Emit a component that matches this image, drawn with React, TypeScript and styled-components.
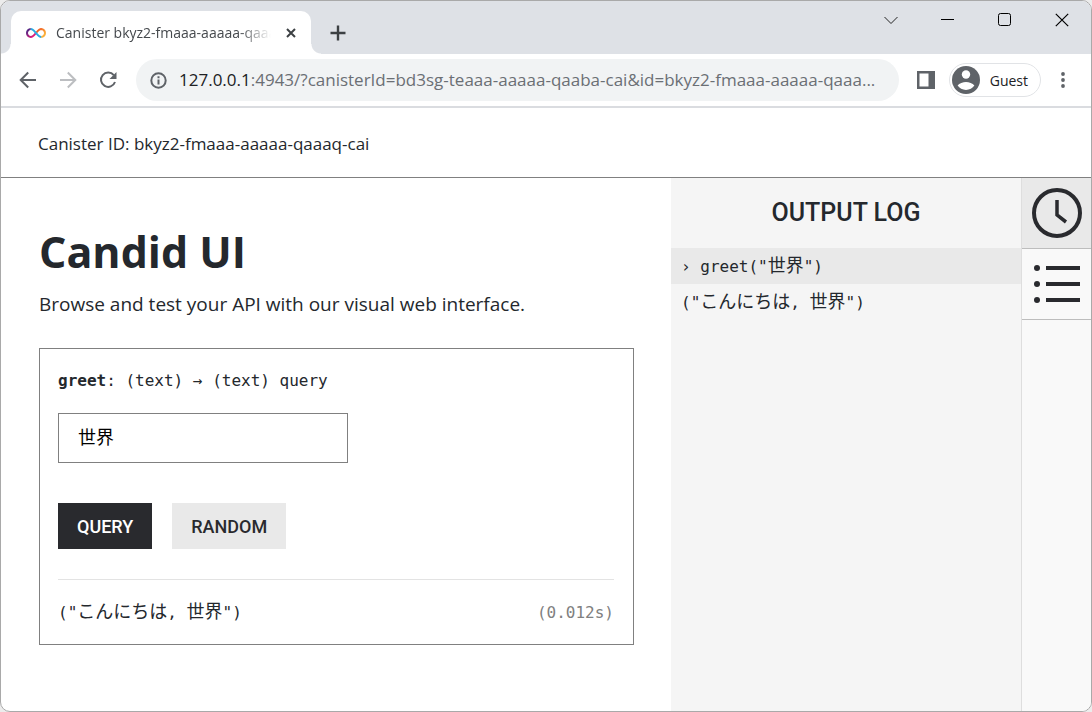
import React from 'react';
import styled, { createGlobalStyle } from 'styled-components';

const sans = `"Open Sans", "Noto Sans", sans-serif`;
const mono = `"DejaVu Sans Mono", "Noto Sans CJK JP", monospace`;

const GlobalStyle = createGlobalStyle`
  *, *::before, *::after { box-sizing: border-box; }
  body { margin: 0; background: #ececec; color: #24282d; font-family: ${sans}; }
  button, input { margin: 0; padding: 0; border: 0; background: none; font: inherit; color: inherit; }
  button { cursor: pointer; }
  h1, h2, p { margin: 0; }
  svg { display: block; flex: none; }
`;

const Window = styled.div`
  display: flex;
  flex-direction: column;
  min-height: 100vh;
  border: 1px solid #a9a9a9;
  border-radius: 10px;
  background: #fff;
  overflow: hidden;
`;

const TabStrip = styled.div`
  display: flex;
  align-items: flex-end;
  height: 53px;
  padding: 0 1px 0 10px;
  background: #dee1e6;
`;

const Tab = styled.div`
  position: relative;
  display: flex;
  align-items: center;
  width: 300px;
  height: 43px;
  padding: 0 12px 0 15px;
  border-radius: 10px 10px 0 0;
  background: #fff;

  &::before, &::after {
    content: '';
    position: absolute;
    bottom: 0;
    width: 10px;
    height: 10px;
  }
  &::before {
    right: 100%;
    background: radial-gradient(circle at 0 0, #dee1e6 9px, #fff 10px);
  }
  &::after {
    left: 100%;
    background: radial-gradient(circle at 100% 0, #dee1e6 9px, #fff 10px);
  }
`;

const TabTitle = styled.button`
  flex: 1;
  min-width: 0;
  margin: 0 12px 0 10px;
  overflow: hidden;
  text-align: left;
  white-space: nowrap;
  font-size: 14px;
  line-height: 22px;
  color: #45494d;
  mask-image: linear-gradient(to right, #000 85%, transparent);
`;

const IconButton = styled.button<{ $w?: number; $h?: number }>`
  display: flex;
  align-items: center;
  justify-content: center;
  flex: none;
  width: ${(p) => p.$w ?? 40}px;
  height: ${(p) => p.$h ?? 40}px;
`;

const NewTab = styled.div`
  display: flex;
  align-items: center;
  height: 43px;
  padding-left: 7px;
`;

const WindowControls = styled.div`
  display: flex;
  align-self: flex-start;
  margin-left: auto;
`;

const Toolbar = styled.div`
  display: flex;
  align-items: center;
  height: 54px;
  padding: 0 8px 0 7px;
  border-bottom: 2px solid #dadce0;
`;

const AddressBar = styled.div`
  display: flex;
  align-items: center;
  flex: 1;
  min-width: 0;
  height: 42px;
  margin: 0 7px 0 8px;
  padding: 0 14px;
  border-radius: 21px;
  background: #f1f3f4;
  font-size: 17px;
  line-height: 24px;
`;

const Host = styled.label`
  margin-left: 12px;
  color: #202124;
`;

const UrlInput = styled.input`
  flex: 1;
  min-width: 0;
  height: 24px;
  color: #6b6f74;
  outline: none;
  text-overflow: ellipsis;
`;

const Profile = styled.button`
  display: flex;
  align-items: center;
  gap: 10px;
  height: 34px;
  margin: 0 2px 0 3px;
  padding: 0 12px 0 2px;
  border: 1px solid #e1e3e6;
  border-radius: 17px;
  font-size: 14px;
  color: #202124;
`;

const CanisterBar = styled.header`
  display: flex;
  align-items: center;
  height: 70px;
  padding: 2px 37px 0;
  border-bottom: 1px solid #808080;
  font-size: 17px;
  line-height: 24px;
`;

const Body = styled.div`
  display: flex;
  flex: 1;
`;

const Main = styled.main`
  flex: 1;
  min-width: 0;
  padding: 42px 37px 66px 38px;
`;

const Title = styled.h1`
  font-size: 43px;
  line-height: 64px;
  font-weight: 700;
`;

const Intro = styled.p`
  margin: 4px 0 28px;
  font-size: 19px;
  line-height: 32px;
`;

const Card = styled.section`
  padding: 18px 19px 15px 18px;
  border: 1px solid #808080;
  font-family: ${mono};
  font-size: 16px;
`;

const Signature = styled.label`
  display: block;
  line-height: 28px;
`;

const TextArg = styled.input`
  display: block;
  width: 290px;
  max-width: 100%;
  height: 50px;
  margin-top: 18px;
  padding: 0 19px 4px;
  border: 1px solid #808080;
  font-size: 18px;
  color: #000;
`;

const Actions = styled.div`
  display: flex;
  gap: 20px;
  margin: 40px 0 30px;
`;

const Action = styled.button<{ $primary?: boolean }>`
  height: 46px;
  padding: 0 19px;
  background: ${(p) => (p.$primary ? '#292a2e' : '#e9e9e9')};
  color: ${(p) => (p.$primary ? '#fff' : '#292a2e')};
  font-family: Roboto, sans-serif;
  font-size: 18px;
  font-weight: 500;
`;

const Result = styled.div`
  display: flex;
  align-items: center;
  justify-content: space-between;
  padding-top: 16px;
  border-top: 1px solid #e3e3e3;
  line-height: 32px;
`;

const Elapsed = styled.span`
  color: #808080;
`;

const Kana = styled.span`
  font-size: 18px;
`;

const Log = styled.aside`
  width: 350px;
  background: #f5f5f5;
  font-family: ${mono};
  font-size: 16px;
`;

const LogTitle = styled.h2`
  height: 70px;
  font-family: Roboto, sans-serif;
  font-size: 25px;
  font-weight: 500;
  line-height: 70px;
  text-align: center;
`;

const LogRow = styled.div<{ $call?: boolean }>`
  height: 36px;
  padding: 0 10px;
  background: ${(p) => (p.$call ? '#e9e9e9' : 'transparent')};
  line-height: 36px;
  white-space: pre;
`;

const Rail = styled.nav`
  width: 70px;
  border-left: 1px solid #dedede;
  background: #f9f9f9;
`;

const RailButton = styled.button<{ $active?: boolean }>`
  display: flex;
  align-items: center;
  justify-content: center;
  width: 100%;
  height: 71px;
  border-bottom: 1px solid #bdbdbd;
  background: ${(p) => (p.$active ? '#e9e9e9' : 'transparent')};
`;

const Logo = () => (
  <svg width="20" height="12" viewBox="0 0 20 12" fill="none" strokeWidth="2">
    <defs>
      <linearGradient id="warm" x1="10" y1="1" x2="19" y2="10" gradientUnits="userSpaceOnUse">
        <stop offset="0.2" stopColor="#f15a24" />
        <stop offset="0.8" stopColor="#fbb03b" />
      </linearGradient>
      <linearGradient id="cool" x1="10" y1="11" x2="1" y2="2" gradientUnits="userSpaceOnUse">
        <stop offset="0.2" stopColor="#ed1e79" />
        <stop offset="0.9" stopColor="#522785" />
      </linearGradient>
    </defs>
    <path d="M10 6C12 3.6 13.2 2 15.2 2A3.9 3.9 0 0 1 19 6A3.9 3.9 0 0 1 15.2 10" stroke="url(#warm)" />
    <path d="M10 6C8 8.4 6.8 10 4.8 10A3.9 3.9 0 0 1 1 6A3.9 3.9 0 0 1 4.8 2" stroke="url(#cool)" />
    <path d="M4.8 2C6.8 2 8 3.6 10 6C12 8.4 13.2 10 15.2 10" stroke="#29abe2" />
  </svg>
);

export default function App() {
  return (
    <>
      <GlobalStyle />
      <Window>
        <TabStrip>
          <Tab>
            <Logo />
            <TabTitle>Canister bkyz2-fmaaa-aaaaa-qaaaq-cai</TabTitle>
            <IconButton $w={16} $h={24} aria-label="Close tab">
              <svg width="10" height="10" viewBox="0 0 10 10" stroke="#3c4043" strokeWidth="2">
                <path d="M1 1l8 8M9 1l-8 8" />
              </svg>
            </IconButton>
          </Tab>
          <NewTab>
            <IconButton aria-label="New tab">
              <svg width="16" height="16" viewBox="0 0 16 16" stroke="#3c4043" strokeWidth="2.4">
                <path d="M8 .5v15M.5 8h15" />
              </svg>
            </IconButton>
          </NewTab>
          <WindowControls>
            <IconButton $w={57} $h={38} aria-label="Search tabs">
              <svg width="14" height="9" viewBox="0 0 14 9" fill="none" stroke="#222">
                <path d="M.5 1l6.5 6.5L13.5 1" />
              </svg>
            </IconButton>
            <IconButton $w={57} $h={38} aria-label="Minimize">
              <svg width="14" height="2" viewBox="0 0 14 2" stroke="#000">
                <path d="M0 .5h13" />
              </svg>
            </IconButton>
            <IconButton $w={57} $h={38} aria-label="Maximize">
              <svg width="14" height="14" viewBox="0 0 14 14" fill="none" stroke="#000">
                <rect x=".5" y=".5" width="12" height="12" rx="2" />
              </svg>
            </IconButton>
            <IconButton $w={57} $h={38} aria-label="Close window">
              <svg width="14" height="14" viewBox="0 0 14 14" stroke="#000" strokeWidth="1.2">
                <path d="M.8.8l12.4 12.4M13.2.8L.8 13.2" />
              </svg>
            </IconButton>
          </WindowControls>
        </TabStrip>

        <Toolbar>
          <IconButton aria-label="Back">
            <svg width="18" height="18" viewBox="0 0 18 18" fill="none" stroke="#5f6368" strokeWidth="2">
              <path d="M17 9H2M9.2 1.5L1.7 9l7.5 7.5" />
            </svg>
          </IconButton>
          <IconButton aria-label="Forward">
            <svg width="18" height="18" viewBox="0 0 18 18" fill="none" stroke="#bcbec1" strokeWidth="2">
              <path d="M1 9h15M8.8 1.5L16.3 9l-7.5 7.5" />
            </svg>
          </IconButton>
          <IconButton aria-label="Reload">
            <svg width="18" height="18" viewBox="0 0 18 18" fill="none" stroke="#5f6368" strokeWidth="2">
              <path d="M14.8 4.2A7.2 7.2 0 1 0 16 11" />
              <path d="M17.5 1v7h-7z" fill="#5f6368" stroke="none" />
            </svg>
          </IconButton>
          <AddressBar>
            <svg width="17" height="17" viewBox="0 0 17 17" fill="none" stroke="#5f6368" strokeWidth="2">
              <circle cx="8.5" cy="8.5" r="7.2" />
              <path d="M8.5 7.5v5M8.5 4.3v2" />
            </svg>
            <Host htmlFor="url">127.0.0.1</Host>
            <UrlInput
              id="url"
              defaultValue=":4943/?canisterId=bd3sg-teaaa-aaaaa-qaaba-cai&id=bkyz2-fmaaa-aaaaa-qaaa..."
            />
          </AddressBar>
          <IconButton aria-label="Side panel">
            <svg width="18" height="18" viewBox="0 0 18 18">
              <path d="M0 0h18v18H0zM2.5 2.5v13h9v-13z" fill="#5f6368" fillRule="evenodd" />
            </svg>
          </IconButton>
          <Profile>
            <svg width="28" height="28" viewBox="0 0 28 28">
              <circle cx="14" cy="14" r="14" fill="#5f6368" />
              <circle cx="14" cy="8.5" r="4.2" fill="#fff" />
              <path d="M5.6 19.6C7.3 17.2 11 16 14 16s6.7 1.2 8.4 3.6C20.6 22.4 17.5 24 14 24s-6.6-1.6-8.4-4.4z" fill="#fff" />
            </svg>
            Guest
          </Profile>
          <IconButton aria-label="Menu">
            <svg width="4" height="16" viewBox="0 0 4 16" fill="#5f6368">
              <circle cx="2" cy="2" r="1.9" />
              <circle cx="2" cy="8" r="1.9" />
              <circle cx="2" cy="14" r="1.9" />
            </svg>
          </IconButton>
        </Toolbar>

        <CanisterBar>Canister ID: bkyz2-fmaaa-aaaaa-qaaaq-cai</CanisterBar>

        <Body>
          <Main>
            <Title>Candid UI</Title>
            <Intro>Browse and test your API with our visual web interface.</Intro>
            <Card>
              <Signature htmlFor="greet-arg">
                <b>greet</b>: (text) → (text) query
              </Signature>
              <TextArg id="greet-arg" defaultValue="世界" />
              <Actions>
                <Action $primary>QUERY</Action>
                <Action>RANDOM</Action>
              </Actions>
              <Result>
                <span>
                  ("<Kana>こんにちは</Kana>, <Kana>世界</Kana>")
                </span>
                <Elapsed>(0.012s)</Elapsed>
              </Result>
            </Card>
          </Main>
          <Log>
            <LogTitle>OUTPUT LOG</LogTitle>
            <LogRow $call>
              › greet("<Kana>世界</Kana>")
            </LogRow>
            <LogRow>
              ("<Kana>こんにちは</Kana>, <Kana>世界</Kana>")
            </LogRow>
          </Log>
          <Rail>
            <RailButton $active aria-label="Output log">
              <svg width="50" height="50" viewBox="0 0 50 50" fill="none" stroke="#292a2e" strokeWidth="4">
                <circle cx="25" cy="25" r="23" />
                <path d="M25 12v15l9 7" strokeWidth="3.5" />
              </svg>
            </RailButton>
            <RailButton aria-label="Methods">
              <svg width="46" height="40" viewBox="0 0 46 40" fill="#292a2e" stroke="#292a2e" strokeWidth="4">
                <path d="M12 4h34M12 20h34M12 36h34" />
                <g stroke="none">
                  <circle cx="3" cy="4" r="3" />
                  <circle cx="3" cy="20" r="3" />
                  <circle cx="3" cy="36" r="3" />
                </g>
              </svg>
            </RailButton>
          </Rail>
        </Body>
      </Window>
    </>
  );
}
